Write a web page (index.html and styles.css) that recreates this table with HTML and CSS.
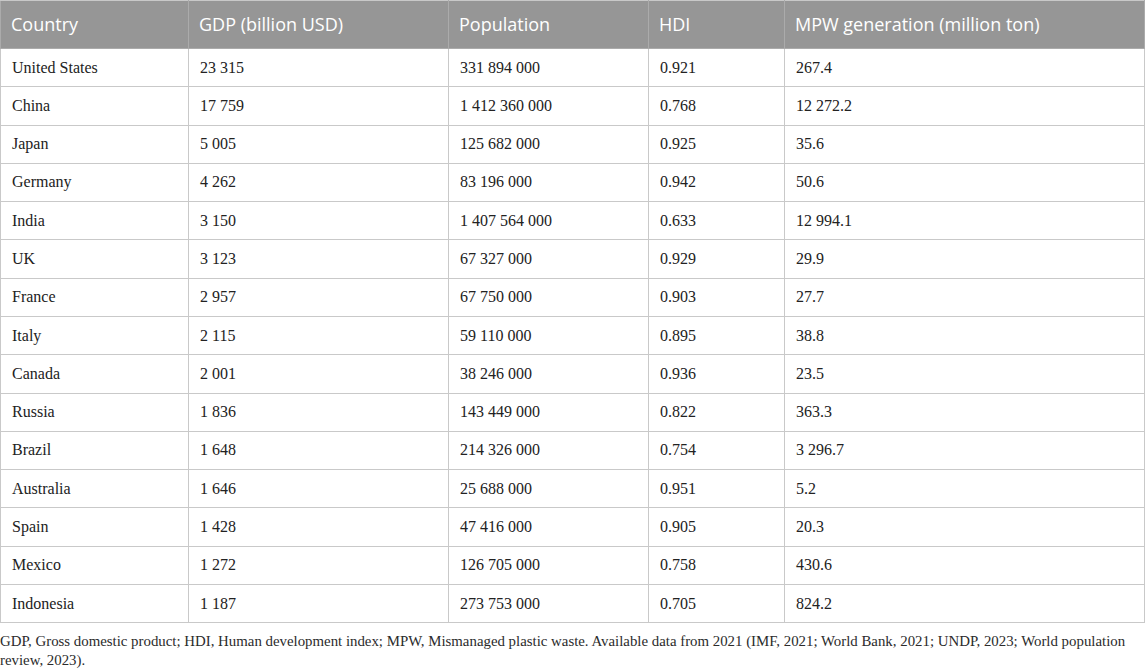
FILE: index.html
```html
<!DOCTYPE html>
<html lang="en">
<head>
  <meta charset="UTF-8">
  <meta name="viewport" content="width=device-width, initial-scale=1.0">
  <title>GDP, population, HDI and MPW generation</title>
  <link rel="stylesheet" href="styles.css">
</head>
<body>
  <table class="data">
    <colgroup>
      <col class="c-country">
      <col class="c-gdp">
      <col class="c-pop">
      <col class="c-hdi">
      <col class="c-mpw">
    </colgroup>
    <thead>
      <tr>
        <th>Country</th>
        <th>GDP (billion USD)</th>
        <th>Population</th>
        <th>HDI</th>
        <th>MPW generation (million ton)</th>
      </tr>
    </thead>
    <tbody>
      <tr><td>United States</td><td>23 315</td><td>331 894 000</td><td>0.921</td><td>267.4</td></tr>
      <tr><td>China</td><td>17 759</td><td>1 412 360 000</td><td>0.768</td><td>12 272.2</td></tr>
      <tr><td>Japan</td><td>5 005</td><td>125 682 000</td><td>0.925</td><td>35.6</td></tr>
      <tr><td>Germany</td><td>4 262</td><td>83 196 000</td><td>0.942</td><td>50.6</td></tr>
      <tr><td>India</td><td>3 150</td><td>1 407 564 000</td><td>0.633</td><td>12 994.1</td></tr>
      <tr><td>UK</td><td>3 123</td><td>67 327 000</td><td>0.929</td><td>29.9</td></tr>
      <tr><td>France</td><td>2 957</td><td>67 750 000</td><td>0.903</td><td>27.7</td></tr>
      <tr><td>Italy</td><td>2 115</td><td>59 110 000</td><td>0.895</td><td>38.8</td></tr>
      <tr><td>Canada</td><td>2 001</td><td>38 246 000</td><td>0.936</td><td>23.5</td></tr>
      <tr><td>Russia</td><td>1 836</td><td>143 449 000</td><td>0.822</td><td>363.3</td></tr>
      <tr><td>Brazil</td><td>1 648</td><td>214 326 000</td><td>0.754</td><td>3 296.7</td></tr>
      <tr><td>Australia</td><td>1 646</td><td>25 688 000</td><td>0.951</td><td>5.2</td></tr>
      <tr><td>Spain</td><td>1 428</td><td>47 416 000</td><td>0.905</td><td>20.3</td></tr>
      <tr><td>Mexico</td><td>1 272</td><td>126 705 000</td><td>0.758</td><td>430.6</td></tr>
      <tr><td>Indonesia</td><td>1 187</td><td>273 753 000</td><td>0.705</td><td>824.2</td></tr>
    </tbody>
  </table>
  <p class="note">GDP, Gross domestic product; HDI, Human development index; MPW, Mismanaged plastic waste. Available data from 2021 (IMF, 2021; World Bank, 2021; UNDP, 2023; World population review, 2023).</p>
</body>
</html>
```

FILE: styles.css
```css
/* Page */
body {
  margin: 0;
  background-color: #fff;
  color: #222;
  font-family: "Liberation Serif", "Times New Roman", serif;
}

/* Table */
.data {
  width: 1145px;
  border-collapse: collapse;
  table-layout: fixed;
}

.c-country { width: 188px; }
.c-gdp { width: 260px; }
.c-pop { width: 200px; }
.c-hdi { width: 136px; }

.data th {
  background-color: #969696;
  color: #fff;
  font-family: "Open Sans", "Noto Sans", sans-serif;
  font-size: 18px;
  font-weight: normal;
  text-align: left;
  line-height: 24px;
  padding: 11px 10px 12px;
  border: 1px solid #ababab;
  border-top-color: #c8c8c8;
}

.data td {
  font-size: 16px;
  line-height: 20px;
  padding: 8.6px 11px 8.7px;
  border: 1px solid #c9c9c9;
}

/* Footnote */
.note {
  margin: 9px 0 0;
  font-size: 14.85px;
  line-height: 19px;
  color: #2b2b2b;
}
```
